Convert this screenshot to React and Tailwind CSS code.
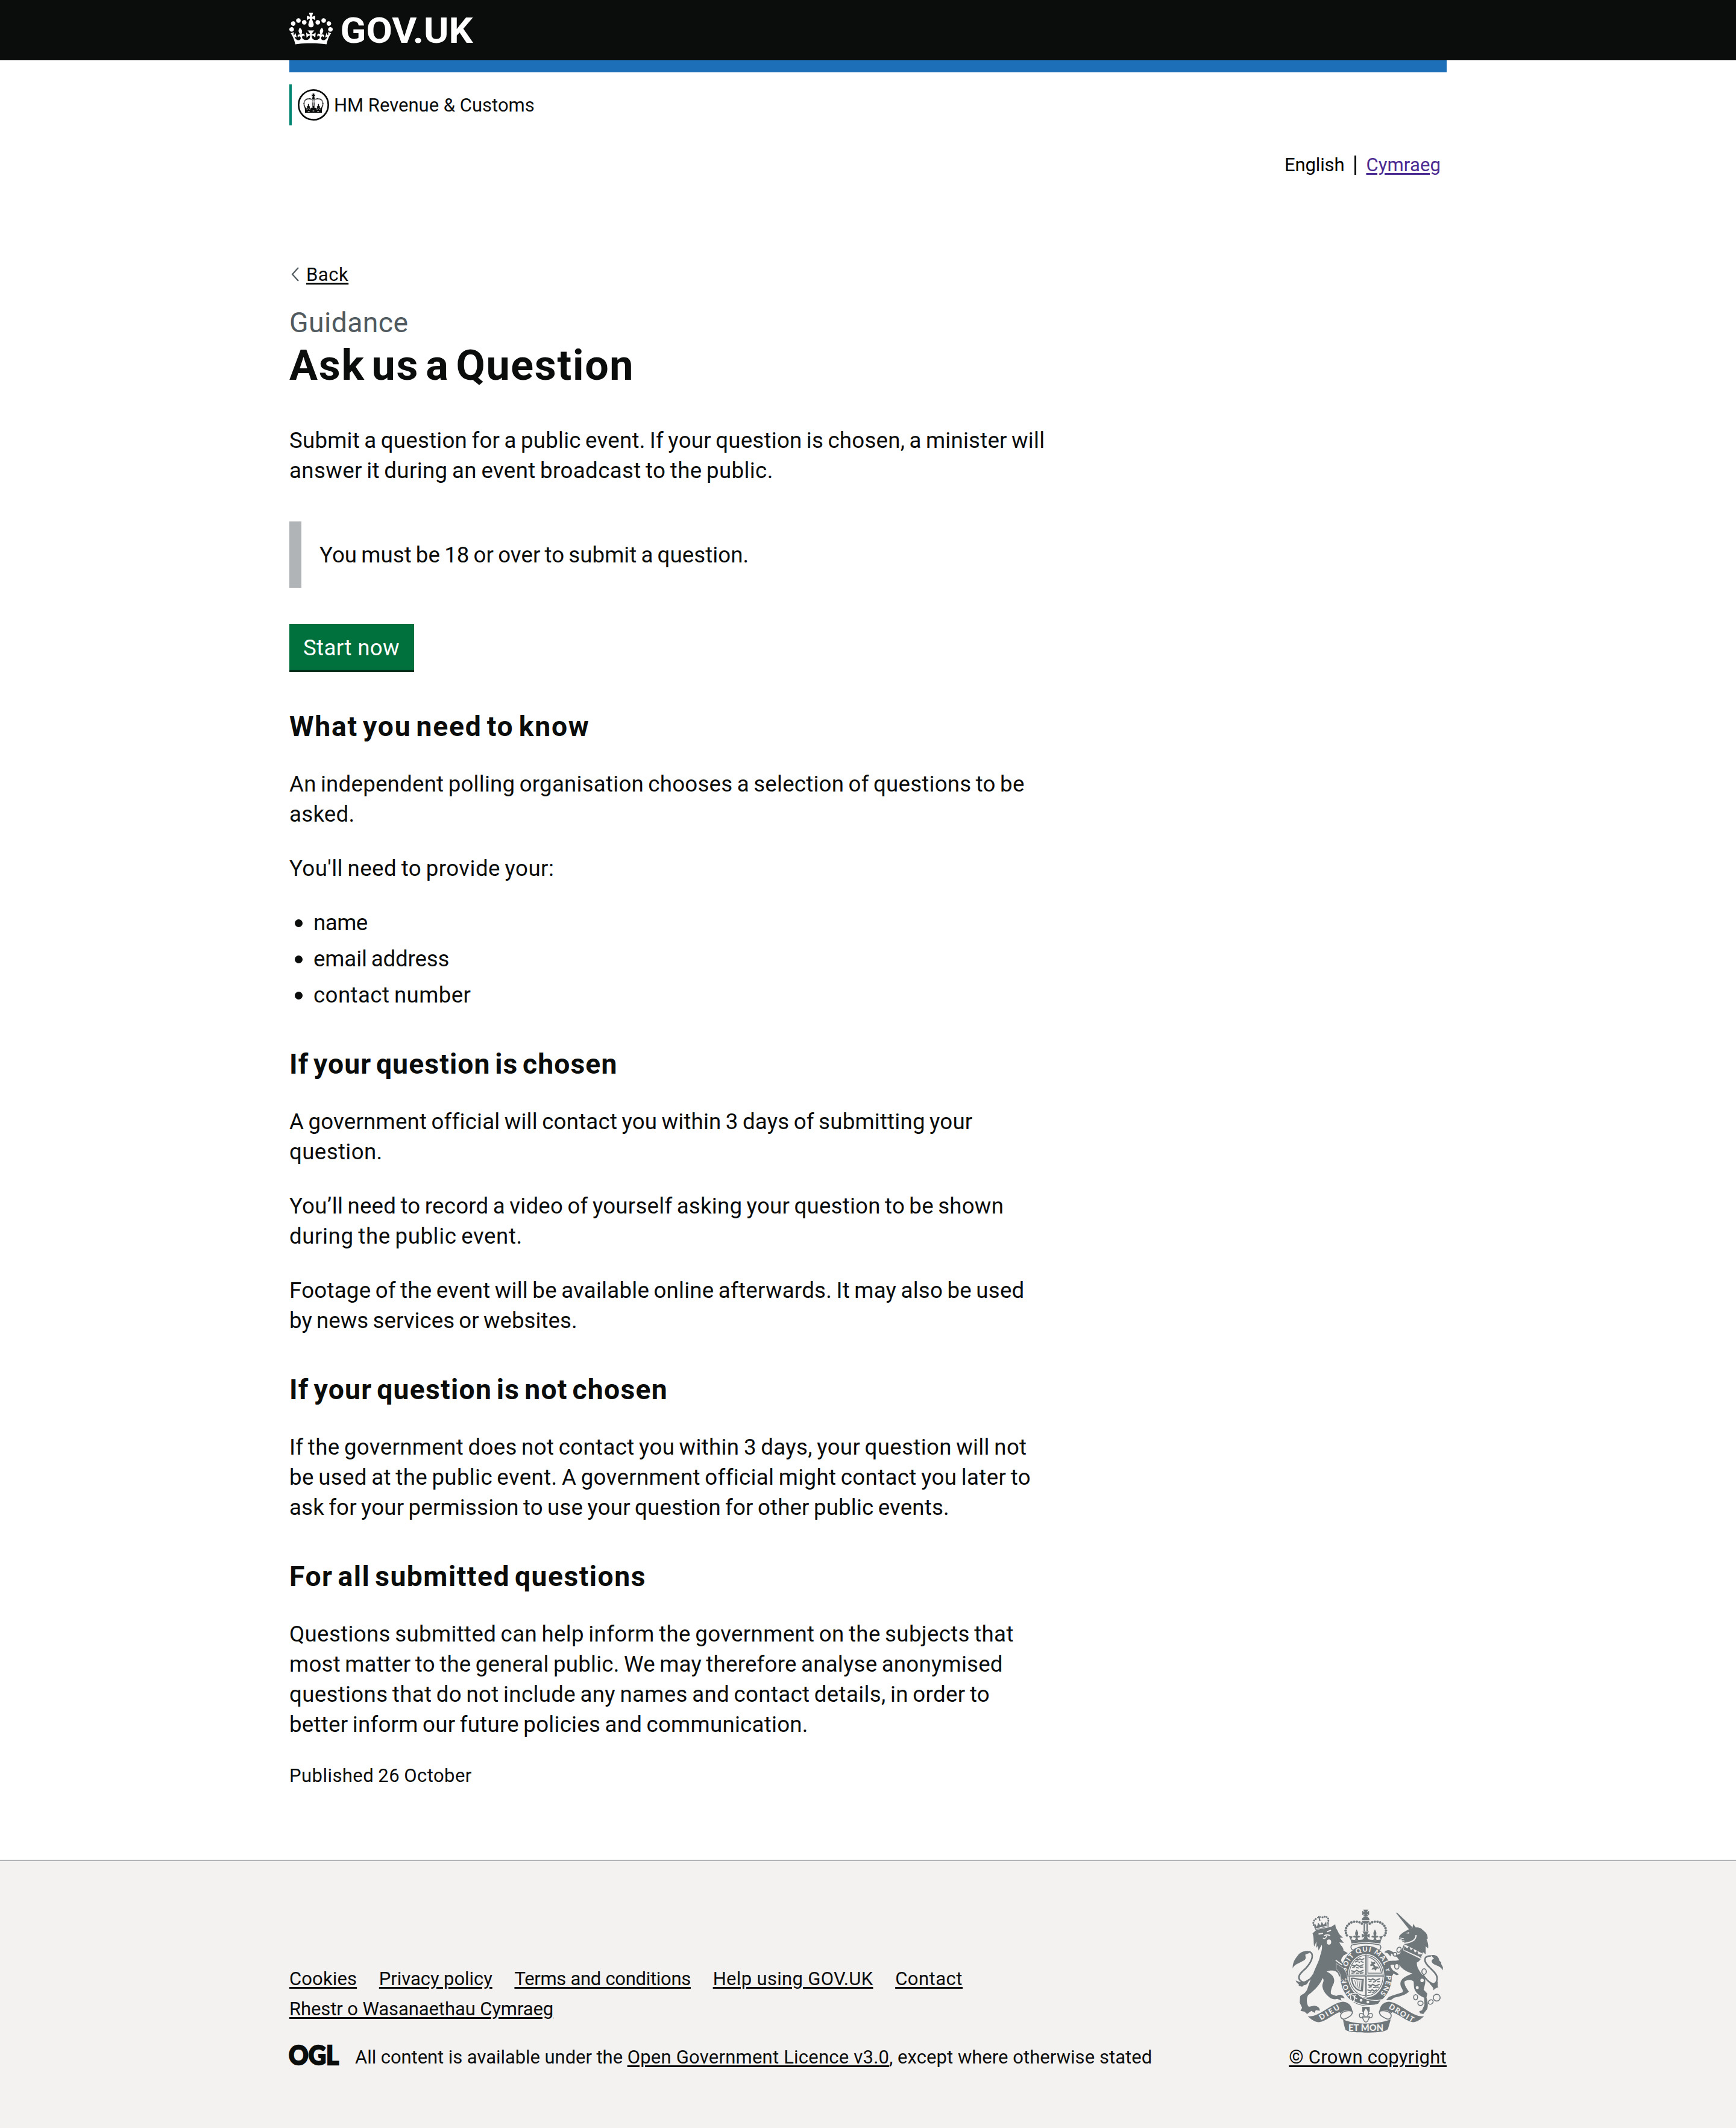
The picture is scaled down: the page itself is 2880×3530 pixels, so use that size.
import React from 'react';

const LINK = 'underline decoration-[3px] underline-offset-[3px]';

function Line({ t, children }) {
  return <span className={`block whitespace-nowrap ${t}`}>{children}</span>;
}

function Para({ className = 'mt-10', children }) {
  return <p className={`-mb-px pt-px text-[36.67px] leading-[50px] [word-spacing:-2px] ${className}`}>{children}</p>;
}

function Heading({ t, children }) {
  return <h2 className={`mt-[60px] whitespace-nowrap text-[46.3px] font-bold leading-[60px] [word-spacing:-5px] ${t}`}>{children}</h2>;
}

function Bullet({ t, children }) {
  return (
    <li className="flex h-[50px] items-center">
      <span className="ml-[9px] mr-[18px] h-[13px] w-[13px] rounded-full bg-[#0b0c0c]" />
      <span className={`whitespace-nowrap ${t}`}>{children}</span>
    </li>
  );
}

function GovCrown() {
  return (
    <svg viewBox="0 0 132 97" className="h-[53px] w-[72px]" fill="#fff" fillRule="evenodd">
      <path d="M25 30.2c3.5 1.5 7.7-.2 9.1-3.7 1.5-3.6-.2-7.8-3.9-9.2-3.6-1.4-7.6.3-9.1 3.9-1.4 3.5.3 7.5 3.9 9zM9 39.5c3.6 1.5 7.8-.2 9.2-3.7 1.5-3.6-.2-7.8-3.9-9.1-3.6-1.5-7.6.2-9.1 3.8-1.4 3.5.3 7.5 3.8 9zM4.4 57.2c3.5 1.5 7.7-.2 9.1-3.8 1.5-3.6-.2-7.7-3.9-9.1-3.5-1.5-7.6.3-9.1 3.8-1.4 3.5.3 7.6 3.9 9.1zm38.3-21.4c3.5 1.5 7.7-.2 9.1-3.8 1.5-3.6-.2-7.7-3.9-9.1-3.6-1.5-7.6.3-9.1 3.8-1.3 3.6.4 7.7 3.9 9.1zm64.4-5.6c-3.6 1.5-7.8-.2-9.1-3.7-1.5-3.6.2-7.8 3.8-9.2 3.6-1.4 7.7.3 9.2 3.9 1.3 3.5-.4 7.5-3.9 9zm15.9 9.3c-3.6 1.5-7.7-.2-9.1-3.7-1.5-3.6.2-7.8 3.7-9.1 3.6-1.5 7.7.2 9.2 3.8 1.5 3.5-.3 7.5-3.8 9zm4.7 17.7c-3.6 1.5-7.8-.2-9.2-3.8-1.5-3.6.2-7.7 3.9-9.1 3.6-1.5 7.7.3 9.2 3.8 1.3 3.5-.4 7.6-3.9 9.1zM89.3 35.8c-3.6 1.5-7.8-.2-9.2-3.8-1.4-3.6.2-7.7 3.9-9.1 3.6-1.5 7.7.3 9.2 3.8 1.4 3.6-.3 7.7-3.9 9.1zM69.7 17.7l8.9 4.7V9.3l-8.9 2.8c-.2-.3-.5-.6-.9-.9L72.4 0H59.6l3.5 11.2c-.3.3-.6.5-.9.9l-8.8-2.8v13.1l8.8-4.7c.3.3.6.7.9.9l-5 15.4v.1c-.2.8-.4 1.6-.4 2.4 0 4.1 3.1 7.5 7 8.1h.2c.3 0 .7.1 1 .1.4 0 .7 0 1-.1h.2c4-.6 7.1-4.1 7.1-8.1 0-.8-.1-1.7-.4-2.4V34l-5.1-15.4c.4-.2.7-.6 1-.9zM66 92.8c16.9 0 32.8 1.1 47.1 3.2 4-16.9 8.9-26.7 14-33.5l-9.6-3.4c1 4.9 1.1 7.2 0 10.2-1.5-1.4-3-4.3-4.2-8.7L108.6 76c2.8-2 5-3.2 7.5-3.3-4.4 9.4-10 11.9-13.6 11.2-4.3-.8-6.3-4.6-5.6-7.9 1-4.7 5.7-5.9 8-.5 4.3-8.7-3-11.4-7.6-8.8 7.1-7.2 7.9-13.5 2.1-21.1-8 6.1-8.1 12.3-4.5 20.8-4.7-5.4-12.1-2.5-9.5 6.2 3.4-5.2 7.9-2 7.2 3.1-.6 4.3-6.4 7.8-13.5 7.2-10.3-.9-10.9-8-11.2-13.8 2.5-.5 7.1 1.8 11 7.3L80.2 60c-4.1 4.4-8 5.3-12.3 5.4 1.4-4.4 8-11.6 8-11.6H55.5s6.4 7.2 7.9 11.6c-4.2-.1-8-1-12.3-5.4l1.4 16.4c3.9-5.5 8.5-7.7 10.9-7.3-.3 5.8-.9 12.8-11.1 13.8-7.2.6-12.9-2.9-13.5-7.2-.7-5 3.8-8.3 7.1-3.1 2.7-8.7-4.6-11.6-9.4-6.2 3.7-8.5 3.6-14.7-4.6-20.8-5.8 7.6-5 13.9 2.2 21.1-4.7-2.6-11.9.1-7.7 8.8 2.3-5.5 7.1-4.2 8.1.5.7 3.3-1.3 7.1-5.7 7.9-3.5.7-9-1.8-13.5-11.2 2.5.1 4.7 1.3 7.5 3.3l-4.7-15.4c-1.2 4.4-2.7 7.2-4.3 8.7-1.1-3-.9-5.3 0-10.2l-9.5 3.4c5 6.9 9.9 16.7 14 33.5 14.8-2.1 30.8-3.2 47.7-3.2z" />
    </svg>
  );
}

/* Round departmental crest: an arched crown inside a ring. */
function Crest() {
  const half = (
    <g>
      <path d="M174 496C160 486 135 492 133 513C132 524 137 532 142 540" fill="none" stroke="#0b0c0c" strokeWidth="5.5" strokeDasharray="5 1.6" />
      <path d="M138 549L136 532L144 540L149 536L145 532L151 528L155 518L159 528L165 532L161 536L165 541L173 534L180 538V549Z" fill="#0b0c0c" />
      <path d="M146 545q9-7 18 0" fill="none" stroke="#fff" strokeWidth="2" />
      <circle cx="155" cy="520" r="3" fill="#0b0c0c" />
    </g>
  );
  return (
    <svg viewBox="102 444 156 156" className="h-[52px] w-[52px]">
      <circle cx="180" cy="522" r="74" fill="none" stroke="#0b0c0c" strokeWidth="8" />
      {half}
      <g transform="translate(360 0) scale(-1 1)">{half}</g>
      <path d="M175 466h10l-3 6 6-3v11l-6-3 3 6h-10l3-6-6 3v-11l6 3z" fill="#0b0c0c" />
      <circle cx="180" cy="489" r="6.5" fill="#0b0c0c" />
      <path d="M175 496V530M180 496V530M185 496V530" stroke="#0b0c0c" strokeWidth="2.6" strokeDasharray="4 1.5" />
      <path d="M173 526h14l-4 8 4 10h-14l4-10z" fill="#0b0c0c" />
      <path d="M138 548h84v13h-84z" fill="#0b0c0c" />
      <path d="M152 554h9M176 552h8M199 554h9" stroke="#fff" strokeWidth="3" />
    </svg>
  );
}

const G = '#6f777b';
const B = '#f3f2f1';

function arcDots(cx, cy, rx, ry, from, to, n) {
  return Array.from({ length: n }, (_, i) => {
    const a = ((from + ((to - from) * i) / (n - 1)) * Math.PI) / 180;
    return [cx + rx * Math.cos(a), cy + ry * Math.sin(a)];
  });
}

function RoyalArms() {
  const left = arcDots(447, 187, 50, 46, 150, 308, 11);
  const right = left.map(([x, y]) => [995 - x, y]);
  return (
    <svg viewBox="114 70 786 640" className="h-[213px] w-[262px]" fill={G}>
      {/* Lion */}
      <path d="M232 200L252 182L325 167L345 154L348 172C362 190 360 205 385 221L368 222L388 247L366 244C372 262 388 268 386 285L408 298L386 310C378 322 372 328 376 340C395 360 408 390 409 432C398 440 382 438 374 432L377 405C368 424 362 412 360 400C350 385 325 380 302 390C335 405 345 425 338 448C325 475 320 492 325 503L350 512C370 498 386 508 393 524L372 519L376 535L355 526C345 530 330 528 318 520C300 505 286 490 282 468C276 448 296 438 282 422C270 455 240 485 210 507C198 530 205 560 214 566L240 560C262 563 270 575 268 585L248 582L243 596L226 586L205 602L192 590L172 586L180 570L168 545L170 515C175 502 190 508 205 480C215 450 225 420 235 402C245 370 265 340 270 310C277 290 282 270 278 256L262 285L258 262L250 272L252 240L240 265C236 240 240 220 232 200Z" />
      <path d="M262 203L284 199M304 192L324 184M290 212C300 205 312 205 318 212" stroke={B} strokeWidth="6" fill="none" />
      <path d="M284 222C290 230 300 224 303 212M308 206L320 210" stroke={B} strokeWidth="4" fill="none" />
      <ellipse cx="314" cy="243" rx="11" ry="13" fill={B} />
      <path d="M347 333L400 372" stroke={B} strokeWidth="5" />
      {/* Lion's crown */}
      <path d="M246 182L240 168L244 150L254 168L260 146L271 160L278 142L288 158L300 140L302 160L312 150L313 166Z" />
      <path d="M248 177L310 162" stroke={B} strokeWidth="3.5" />
      {[[238,158],[236,147],[240,136],[248,128],[282,120],[292,116],[302,118],[310,126],[311,137],[309,148]].map(([x, y], i) => (
        <circle key={i} cx={x} cy={y} r="4.8" />
      ))}
      <path d="M262 112L269 138M255 122L276 117" stroke={G} strokeWidth="6" />
      {/* Lion's tail */}
      <path d="M236 406C212 445 186 450 172 436C150 412 178 394 200 372C232 338 244 296 212 290" fill="none" stroke={G} strokeWidth="8" />
      <path d="M222 290C204 284 176 286 158 310C144 328 132 345 133 374C142 352 160 352 182 338C206 328 196 318 196 306C204 300 214 302 222 290Z" />
      <path d="M148 434L158 438C172 446 190 444 214 426C212 446 204 458 188 458L180 466L162 460C172 456 152 448 148 434Z" />
      {/* Crown */}
      {left.concat(right).map(([x, y], i) => (
        <circle key={i} cx={x} cy={y} r="6.3" />
      ))}
      <path d="M484 81h26l-8 13 12-7v22l-12-7 8 12h-26l8-12-12 7v-22l12 7z" />
      <path d="M478 134a19 19 0 0 1 38 0zM478 138h38c-2 8-10 13-19 13s-17-5-19-13z" />
      <path d="M490 150V188M504 150V188" stroke={G} strokeWidth="7" />
      <path d="M481 190h32l-10 17 14-6v20l-14-6 9 18h-30l9-18-14 6v-20l14 6z" />
      <path d="M452 180c8 14 10 22 4 32 8-4 12 0 14 6l-14 4 4 10h-16l4-10-14-4c2-6 6-10 14-6-6-10-4-18 4-32zM543 180c8 14 10 22 4 32 8-4 12 0 14 6l-14 4 4 10h-16l4-10-14-4c2-6 6-10 14-6-6-10-4-18 4-32z" />
      <path d="M412 212l20 4-8 14c24 6 48 2 74-2 26 4 50 8 74 2l-8-14 20-4c-8 14-12 24-14 38-46-8-98-8-144 0-2-14-6-24-14-38z" />
      {/* Garter and shield */}
      <ellipse cx="499" cy="412" rx="129" ry="149" />
      <path d="M428 258C470 246 526 246 568 258C576 266 572 280 564 284C526 256 472 256 434 284C424 280 420 266 428 258Z" fill={B} stroke={G} strokeWidth="5" />
      <ellipse cx="499" cy="411" rx="91" ry="109" fill={B} />
      <ellipse cx="499" cy="410" rx="85" ry="101" fill="none" stroke={G} strokeWidth="4" />
      <path d="M499 306V516M410 410H588" stroke={G} strokeWidth="9" />
      <path d="M499 306V516M410 410H588" stroke={B} strokeWidth="2" />
      <g fill="none" stroke={G} strokeWidth="6" strokeLinecap="round">
        <path d="M452 330l8 2 8-6 8 6 12-6M446 342l10-4M462 342l4 2M474 340l10 4" />
        <path d="M430 358l14 4 8-6 14 8 18-8M432 370l10-4M452 370l8 2M470 370l12-2" />
        <path d="M426 386l16 4 10-6 14 8 18-8M428 398l12-2M450 398l10 0M470 398l14-2" />
        <path d="M510 428l14 4 8-6 14 8 20-8M514 440l10-2M536 442l10-2M556 440l10 0" />
        <path d="M510 456l14 4 8-6 14 8 18-8M514 468l10-2M536 470l10-2M552 468l8 0" />
        <path d="M508 482l14 4 8-6 10 8 10-6M512 494l12-2M532 494l6-2" />
      </g>
      <path d="M508 316C540 326 566 350 576 398H508Z" fill="none" stroke={G} strokeWidth="4" />
      <path d="M524 338l10 6 8-4 4 10-8 4 8 10 12 2 6 10-12-2-4 12-10-8-12 4 4-10 8-4-8-8-8 4-4-8 8-4z" />
      <path d="M426 424C440 420 466 434 484 430L480 486C456 486 438 468 432 448Z" fill="none" stroke={G} strokeWidth="7" />
      <path d="M442 432L450 464M453 434L460 474M464 436L469 480M474 436L476 484" stroke={G} strokeWidth="3" />
      <defs>
        <path id="motto" d="M437 507A101 121 0 1 1 561 507" />
      </defs>
      <text fill={B} fontFamily="Lato, sans-serif" fontWeight="900" fontSize="34">
        <textPath href="#motto" textLength="566" startOffset="8">HONI SOIT QUI MAL Y PENSE</textPath>
      </text>
      <path d="M424 504C440 494 462 498 466 510C500 532 540 538 576 530L560 552C520 566 470 556 440 540C422 540 418 520 424 504Z" stroke={B} strokeWidth="4" />
      <path d="M430 508c14 2 16 24 4 30M446 506l-6 12 14 8" fill="none" stroke={B} strokeWidth="5" />
      <circle cx="474" cy="533" r="7" fill={B} />
      <circle cx="508" cy="542" r="7" fill={B} />
      {/* Lion's paw over the garter */}
      <path d="M350 350L384 372C396 385 410 410 406 432L396 424L394 440L382 430L373 436C376 416 370 396 350 376Z" stroke={B} strokeWidth="2" />
      {/* Unicorn */}
      <path d="M647 96L654 97L731 170L714 181Z" />
      <path d="M664 214C676 196 700 186 714 178L730 172L734 153L746 170C768 170 776 176 780 182C800 196 806 208 806 226L800 228C808 246 810 262 808 274L796 264L796 304L782 292C782 308 778 330 752 345C750 375 772 395 790 420C800 440 790 460 786 480L804 500L800 520C808 545 808 560 804 576L784 602L768 598L764 588L778 582L790 556L788 520C770 512 745 500 738 470L736 440C728 428 700 430 690 440C690 460 700 470 712 490C700 505 665 515 640 520L622 532L598 533L612 517L628 510L680 494C688 480 670 470 670 452C668 425 700 412 730 400C705 392 680 380 664 356C640 362 628 350 620 360C624 374 632 388 648 392L663 404L652 408L634 400L632 410C618 400 620 388 610 372C600 356 602 345 612 338C630 334 650 338 664 332C656 325 656 318 646 314L624 300L622 316L606 298L590 294C598 284 608 280 622 286L656 306L668 300L688 254L690 240C680 245 672 236 678 230L662 230Z" />
      <path d="M748 208C748 236 722 244 688 250" fill="none" stroke={B} strokeWidth="6" />
      <path d="M696 199L714 193L712 201Z" fill={B} />
      <path d="M664 222L688 226M668 232L690 236" stroke={B} strokeWidth="3" />
      {/* Unicorn's collar */}
      <path d="M690 254L784 302L772 328L684 284Z" fill={B} />
      <path d="M686 284L690 262L704 274L714 264L722 284L734 274L742 296L754 286L760 304L780 304L770 322Z" />
      <path d="M690 285L768 320" stroke={B} strokeWidth="4" />
      {/* Chain */}
      <g fill={B} stroke={G} strokeWidth="5">
        <ellipse cx="663" cy="281" rx="10" ry="13" transform="rotate(25 663 281)" />
        <ellipse cx="643" cy="304" rx="9" ry="9" />
        <ellipse cx="652" cy="364" rx="11" ry="14" />
        <ellipse cx="788" cy="390" rx="11" ry="14" />
        <ellipse cx="778" cy="434" rx="11" ry="11" />
        <ellipse cx="754" cy="470" rx="10" ry="10" />
        <ellipse cx="746" cy="518" rx="10" ry="13" />
        <ellipse cx="770" cy="548" rx="13" ry="11" />
        <ellipse cx="821" cy="542" rx="13" ry="10" transform="rotate(-35 821 542)" />
        <circle cx="851" cy="520" r="17" />
      </g>
      {/* Unicorn's tail */}
      <path d="M782 406C812 450 840 462 850 440C862 410 838 392 816 370C784 340 782 312 822 312" fill="none" stroke={G} strokeWidth="8" />
      <path d="M822 309C840 304 858 312 862 328C864 344 878 340 873 352L882 368L881 384C872 366 858 362 842 356C820 344 822 330 838 326Z" />
      <path d="M812 442C828 456 844 456 856 438C858 452 852 462 860 468C848 470 842 476 834 484C838 466 820 462 812 442Z" />
      {/* Ribbons */}
      <path d="M208 613C270 618 325 545 384 540C412 542 428 560 431 588C408 576 386 582 372 598L366 592C330 606 300 636 268 642C244 644 226 628 208 613Z" />
      <path d="M788 613C726 618 671 545 612 540C584 542 568 560 565 588C588 576 610 582 624 598L630 592C666 606 700 636 728 642C752 644 770 628 788 613Z" />
      <path d="M430 588C410 580 378 588 372 606C370 622 382 634 402 622C420 614 434 604 430 588ZM566 588C586 580 618 588 624 606C626 622 614 634 594 622C576 614 562 604 566 588Z" fill={B} stroke={G} strokeWidth="5" />
      <path d="M384 628C440 656 556 656 622 628C618 644 612 660 608 676C596 692 540 694 500 694C460 694 408 692 396 680C390 660 386 644 384 628Z" />
      <g fill={B} fontFamily="Lato, sans-serif" fontWeight="900">
        <text x="411" y="685" fontSize="44" textLength="174">ET MON</text>
        <text transform="translate(274 633) rotate(-31)" fontSize="37" textLength="112">DIEU</text>
        <text transform="translate(610 572) rotate(31)" fontSize="37" textLength="138">DROIT</text>
      </g>
      {/* Fleur-de-lis pendant */}
      <path d="M480 566h37v24h-37z" />
      <path d="M498 570C512 586 514 600 506 612C514 592 534 594 530 612C528 622 518 622 516 616C512 628 506 642 498 642C490 642 484 628 480 616C478 622 468 622 466 612C462 594 482 592 490 612C482 600 484 586 498 570Z" fill={B} stroke={G} strokeWidth="4.5" />
      <path d="M482 616H514" stroke={G} strokeWidth="6" />
    </svg>
  );
}

export default function App() {
  return (
    <div className="flex min-h-[3530px] w-full flex-col bg-white font-['Roboto',sans-serif] text-[#0b0c0c]">
      <header>
        <div className="h-[100px] bg-[#0b0c0c]">
          <div className="mx-auto flex w-[1920px] items-start pt-[21px]">
            <GovCrown />
            <svg viewBox="0 0 240 74" className="-mt-[10px] ml-[12px] h-[74px] w-[240px]">
              <text x="0.5" y="60" fill="#fff" fontFamily="Roboto, sans-serif" fontWeight="700" fontSize="59" textLength="220" lengthAdjust="spacingAndGlyphs">GOV.UK</text>
            </svg>
          </div>
        </div>
        <div className="mx-auto w-[1920px]">
          <div className="h-5 bg-[#1d70b8]" />
          <div className="mt-5 flex h-[68px] items-center border-l-4 border-[#008670] pl-[10px]">
            <Crest />
            <span className="ml-2 whitespace-nowrap pt-[2px] text-[31px] leading-10 tracking-[0px]">HM Revenue &amp; Customs</span>
          </div>
        </div>
      </header>

      <main className="mx-auto w-[1920px]">
        <div className="-mb-px mt-[45px] flex justify-end pr-[10px] pt-px text-[31px] leading-10 text-black">
          <span className="tracking-[-0.12px]">English</span>
          <span className="ml-[17px] mt-1 h-8 w-[3px] bg-[#0b0c0c]" />
          <a className={`ml-4 tracking-[0.13px] text-[#4c2c92] ${LINK}`}>Cymraeg</a>
        </div>

        <div className="mt-[143px] flex text-[31px] leading-10">
          <svg viewBox="0 0 16 26" className="ml-[2px] mt-[6px] h-[26px] w-4" fill="none" stroke="#505a5f" strokeWidth="2.2">
            <path d="M13 2L3 13L13 24" />
          </svg>
          <a className={`ml-[10px] tracking-[0.53px] ${LINK}`}>Back</a>
        </div>

        <div className="mt-[29px] text-[46.3px] leading-[60px] tracking-[0.44px] text-[#505a5f]">Guidance</div>
        <h1 className="text-[70px] font-bold leading-[82px] tracking-[1.7px] [word-spacing:-8px]">Ask us a Question</h1>

        <Para className="mt-[58px]">
          <Line t="tracking-[0.23px]">Submit a question for a public event. If your question is chosen, a minister will</Line>
          <Line t="tracking-[0.37px]">answer it during an event broadcast to the public.</Line>
        </Para>

        <div className="mt-[60px] border-l-[20px] border-[#b1b4b6] pb-[29px] pl-[30px] pt-[31px] text-[36.67px] leading-[50px] tracking-[0.05px] [word-spacing:-2px]">
          You must be 18 or over to submit a question.
        </div>

        <button className="mt-[60px] flex h-20 w-[207px] items-start border-b-4 border-[#002d18] bg-[#00703c] pl-[23px] pt-[15px] text-[36.67px] leading-[50px] tracking-[0.35px] text-white">
          Start now
        </button>

        <Heading t="tracking-[1.74px]">What you need to know</Heading>
        <Para>
          <Line t="tracking-[0.23px]">An independent polling organisation chooses a selection of questions to be</Line>
          <Line t="tracking-[0.26px]">asked.</Line>
        </Para>
        <Para>
          <Line t="tracking-[0.46px]">You'll need to provide your:</Line>
        </Para>
        <ul className="-mb-px mt-10 flex flex-col gap-[10px] pt-px text-[36.67px] leading-[50px] [word-spacing:-2px]">
          <Bullet t="tracking-[-0.5px]">name</Bullet>
          <Bullet t="tracking-[-0.13px]">email address</Bullet>
          <Bullet t="tracking-[0.42px]">contact number</Bullet>
        </ul>

        <Heading t="tracking-[1.1px]">If your question is chosen</Heading>
        <Para>
          <Line t="tracking-[0.21px]">A government official will contact you within 3 days of submitting your</Line>
          <Line t="tracking-[0.39px]">question.</Line>
        </Para>
        <Para>
          <Line t="tracking-[0.23px]">You’ll need to record a video of yourself asking your question to be shown</Line>
          <Line t="tracking-[0.6px]">during the public event.</Line>
        </Para>
        <Para>
          <Line t="tracking-[0.24px]">Footage of the event will be available online afterwards. It may also be used</Line>
          <Line t="tracking-[0.05px]">by news services or websites.</Line>
        </Para>

        <Heading t="tracking-[1.26px]">If your question is not chosen</Heading>
        <Para>
          <Line t="tracking-[0.34px]">If the government does not contact you within 3 days, your question will not</Line>
          <Line t="tracking-[0.35px]">be used at the public event. A government official might contact you later to</Line>
          <Line t="tracking-[0.17px]">ask for your permission to use your question for other public events.</Line>
        </Para>

        <Heading t="tracking-[1.48px]">For all submitted questions</Heading>
        <Para>
          <Line t="tracking-[0.34px]">Questions submitted can help inform the government on the subjects that</Line>
          <Line t="tracking-[0.23px]">most matter to the general public. We may therefore analyse anonymised</Line>
          <Line t="tracking-[0.34px]">questions that do not include any names and contact details, in order to</Line>
          <Line t="tracking-[0.26px]">better inform our future policies and communication.</Line>
        </Para>
        <p className="-mb-px mt-10 pt-px text-[31px] leading-10 tracking-[0.45px] [word-spacing:-1px]">Published 26 October</p>
      </main>

      <footer className="mt-[120px] flex-1 border-t-2 border-[#b1b4b6] bg-[#f3f2f1] pt-[76px]">
        <div className="mx-auto flex w-[1920px] items-end justify-between pt-px text-[31px] leading-10">
          <div className="whitespace-nowrap">
            <div className="mb-[10px] flex gap-x-[36.7px]">
              <a className={`tracking-[0.13px] ${LINK}`}>Cookies</a>
              <a className={`tracking-[-0.07px] ${LINK}`}>Privacy policy</a>
              <a className={`tracking-[-0.3px] ${LINK}`}>Terms and conditions</a>
              <a className={`tracking-[0.33px] ${LINK}`}>Help using GOV.UK</a>
              <a className={`tracking-[0.5px] ${LINK}`}>Contact</a>
            </div>
            <div className="mb-10">
              <a className={`tracking-[-0.1px] ${LINK}`}>Rhestr o Wasanaethau Cymraeg</a>
            </div>
            <div className="flex">
              <svg viewBox="-4 -12 90 64" className="-mb-3 -ml-1 -mr-1 -mt-3 h-16 w-[90px]">
                <text x="-1" y="31.6" fill="#0b0c0c" stroke="#0b0c0c" strokeWidth="2.4" fontFamily="Lato, sans-serif" fontWeight="900" fontSize="43.5" textLength="83" lengthAdjust="spacingAndGlyphs">OGL</text>
              </svg>
              <span className="ml-[27px]">
                <span className="tracking-[-0.06px]">All content is available under the </span>
                <a className={`tracking-[0.22px] ${LINK}`}>Open Government Licence v3.0</a>
                <span className="tracking-[0.05px]">, except where otherwise stated</span>
              </span>
            </div>
          </div>
          <div className="flex w-[262px] flex-col items-end">
            <RoyalArms />
            <a className={`mt-4 whitespace-nowrap tracking-[0.3px] ${LINK}`}>© Crown copyright</a>
          </div>
        </div>
      </footer>
    </div>
  );
}
